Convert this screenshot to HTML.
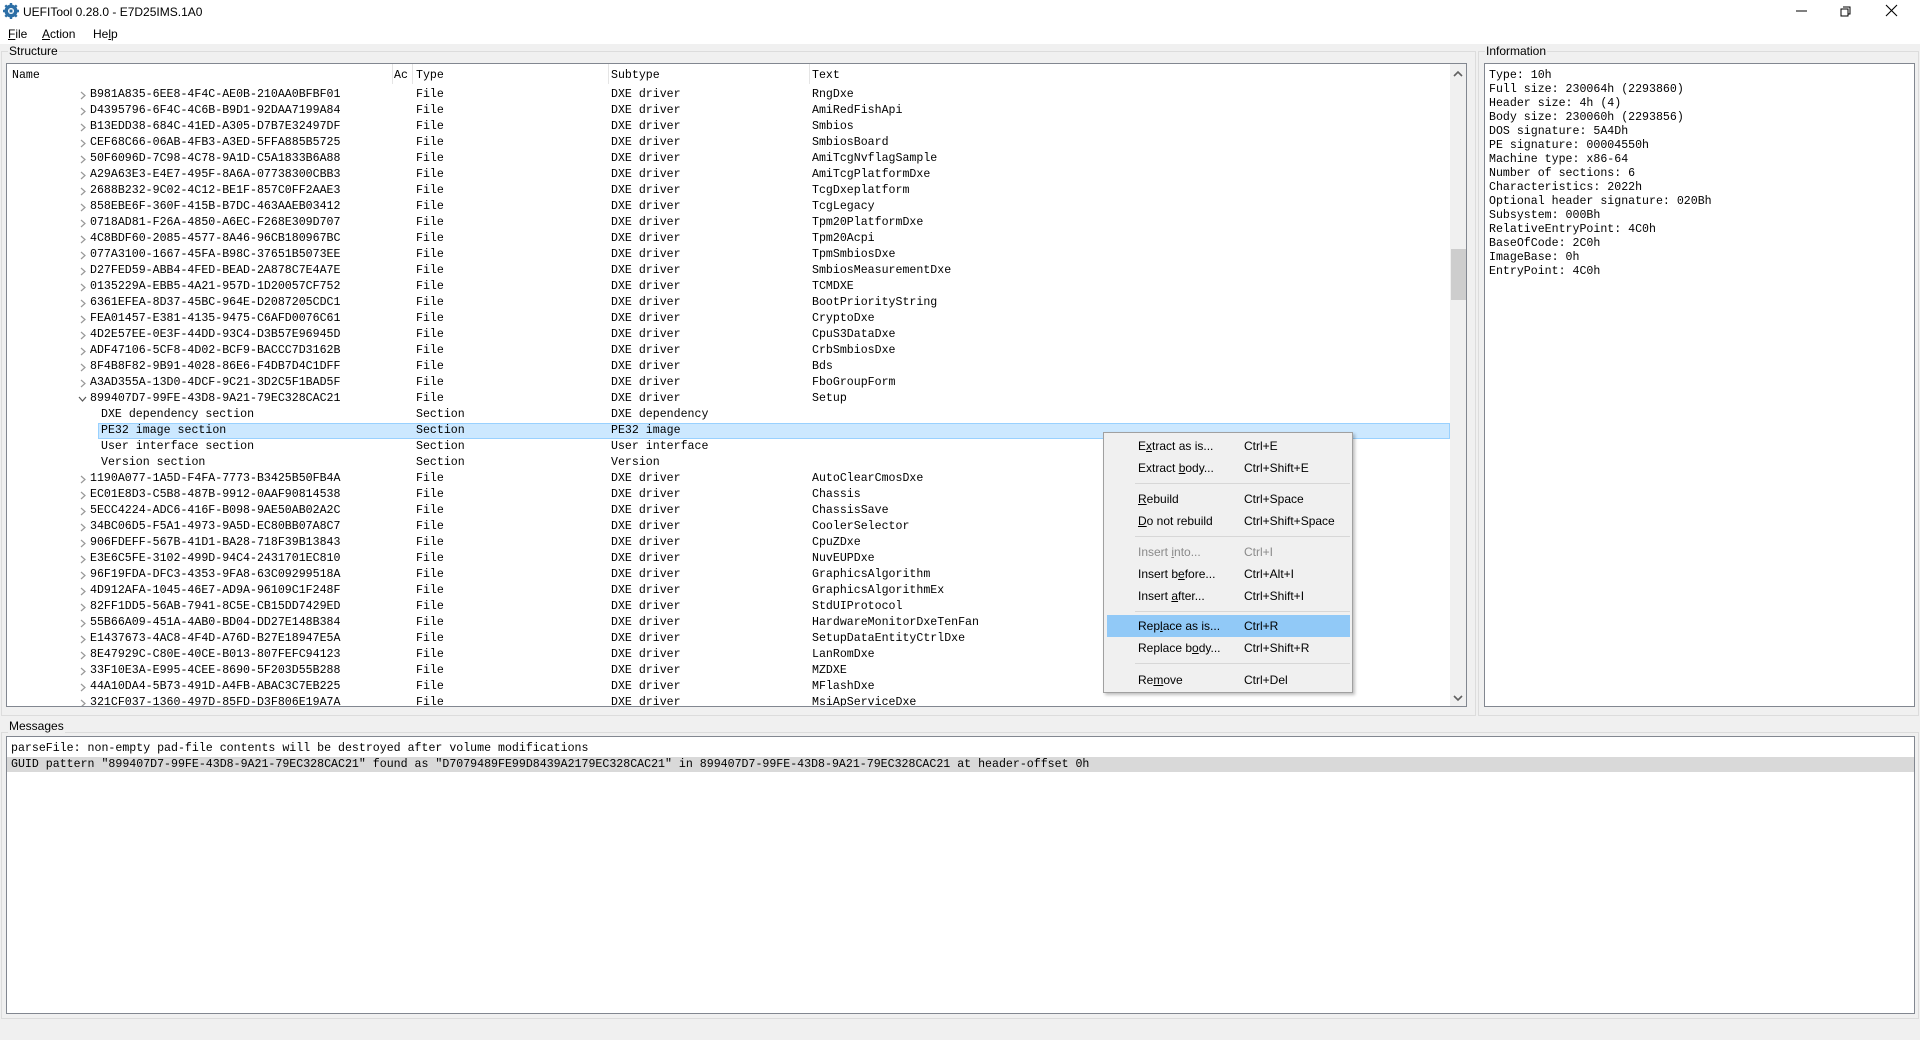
<!DOCTYPE html>
<html><head><meta charset="utf-8"><style>
*{margin:0;padding:0;box-sizing:border-box}
body{width:1920px;height:1040px;background:#f0f0f0;position:relative;overflow:hidden;font-family:"Liberation Sans",sans-serif;font-size:12px;color:#000}
.a{position:absolute;white-space:pre}
.m{font-family:"Liberation Mono",monospace;font-size:11.6px}
.box{position:absolute;background:#fff;border:1px solid #828790}
.grp{position:absolute;border:1px solid #dcdcdc}
.r{position:absolute;left:0;height:16px;line-height:16px;width:1442px}
.r span{position:absolute;top:0}
.mi{position:absolute;left:3px;width:243px;height:22px;line-height:22px}
.mi span{position:absolute}
.sep{position:absolute;left:31px;width:215px;height:1px;background:#d7d7d7}
.dis{color:#8a8a8a}
u{text-decoration:underline}
</style></head><body>
<div class="a" style="left:0;top:0;width:1920px;height:44px;background:#fff"></div>
<svg class="a" style="left:3px;top:3px" width="16" height="16" viewBox="0 0 16 16"><circle cx="8" cy="8" r="6.5" fill="#2d6fa6"/><g stroke="#2d6fa6" stroke-width="2.4"><path d="M8 0v16M0 8h16M2.3 2.3l11.4 11.4M13.7 2.3L2.3 13.7"/></g><circle cx="8" cy="8" r="3" fill="#fff"/><rect x="6.5" y="6.5" width="3" height="3" fill="#2d6fa6"/></svg>
<div class="a" style="left:23px;top:5px;font-size:12px">UEFITool 0.28.0 - E7D25IMS.1A0</div>
<svg class="a" style="left:1796px;top:4px" width="112" height="14"><path d="M0 7h11" stroke="#000"/><path d="M47 3h7v7h-2M45 5h7v7h-7z" fill="none" stroke="#000"/><path d="M90 1l11 11M101 1L90 12" stroke="#000" stroke-width="1.1"/></svg>
<div class="a" style="left:8px;top:27px"><u>F</u>ile</div>
<div class="a" style="left:42px;top:27px"><u>A</u>ction</div>
<div class="a" style="left:93px;top:27px">He<u>l</u>p</div>

<div class="grp" style="left:1px;top:51px;width:1475px;height:665px"></div>
<div class="a" style="left:8px;top:44px;background:#f0f0f0;padding:0 1px">Structure</div>
<div class="grp" style="left:1478px;top:51px;width:441px;height:665px"></div>
<div class="a" style="left:1485px;top:44px;background:#f0f0f0;padding:0 1px">Information</div>
<div class="grp" style="left:1px;top:732px;width:1918px;height:287px"></div>
<div class="a" style="left:8px;top:719px;background:#f0f0f0;padding:0 1px">Messages</div>

<div class="box" style="left:6px;top:63px;width:1461px;height:644px;overflow:hidden">
<div class="a" style="left:385px;top:0;width:1px;height:20px;background:#e5e5e5"></div>
<div class="a" style="left:405px;top:0;width:1px;height:20px;background:#e5e5e5"></div>
<div class="a" style="left:601px;top:0;width:1px;height:20px;background:#e5e5e5"></div>
<div class="a" style="left:802px;top:0;width:1px;height:20px;background:#e5e5e5"></div>
<div class="a m" style="left:5px;top:5px">Name</div>
<div class="a m" style="left:387px;top:5px">Ac</div>
<div class="a m" style="left:409px;top:5px">Type</div>
<div class="a m" style="left:604px;top:5px">Subtype</div>
<div class="a m" style="left:805px;top:5px">Text</div>
<div class="a" style="left:1443px;top:0;width:17px;height:642px;background:#f0f0f0"></div>
<svg class="a" style="left:1446px;top:6px" width="10" height="8"><path d="M1 6l4-4 4 4" fill="none" stroke="#606060" stroke-width="1.6"/></svg>
<svg class="a" style="left:1446px;top:630px" width="10" height="8"><path d="M1 2l4 4 4-4" fill="none" stroke="#606060" stroke-width="1.6"/></svg>
<div class="a" style="left:1444px;top:185px;width:15px;height:51px;background:#cdcdcd"></div>
<div class="a" style="left:91px;top:359px;width:1352px;height:16px;background:#cce8ff;border:1px solid #99d1ff"></div>
<div class="m" id="rows" style="position:absolute;left:0;top:23px"></div>
</div>

<div class="box" style="left:1484px;top:63px;width:431px;height:644px">
<div class="a m" style="left:4px;top:5px;line-height:14px">Type: 10h
Full size: 230064h (2293860)
Header size: 4h (4)
Body size: 230060h (2293856)
DOS signature: 5A4Dh
PE signature: 00004550h
Machine type: x86-64
Number of sections: 6
Characteristics: 2022h
Optional header signature: 020Bh
Subsystem: 000Bh
RelativeEntryPoint: 4C0h
BaseOfCode: 2C0h
ImageBase: 0h
EntryPoint: 4C0h</div>
</div>

<div class="box" style="left:6px;top:736px;width:1909px;height:278px">
<div class="a" style="left:0;top:20px;width:1907px;height:15px;background:#d9d9d9"></div>
<div class="a m" style="left:4px;top:4px;line-height:16px">parseFile: non-empty pad-file contents will be destroyed after volume modifications
GUID pattern "899407D7-99FE-43D8-9A21-79EC328CAC21" found as "D7079489FE99D8439A2179EC328CAC21" in 899407D7-99FE-43D8-9A21-79EC328CAC21 at header-offset 0h</div>
</div>

<div class="a" style="left:1103px;top:432px;width:250px;height:261px;background:#f0f0f0;border:1px solid #a0a0a0;box-shadow:2px 2px 3px rgba(0,0,0,.25)">
<div class="mi" style="top:2px"><span style="left:31px">E<u>x</u>tract as is...</span><span style="left:137px">Ctrl+E</span></div>
<div class="mi" style="top:24px"><span style="left:31px">Extract <u>b</u>ody...</span><span style="left:137px">Ctrl+Shift+E</span></div>
<div class="sep" style="top:50px"></div>
<div class="mi" style="top:55px"><span style="left:31px"><u>R</u>ebuild</span><span style="left:137px">Ctrl+Space</span></div>
<div class="mi" style="top:77px"><span style="left:31px"><u>D</u>o not rebuild</span><span style="left:137px">Ctrl+Shift+Space</span></div>
<div class="sep" style="top:103px"></div>
<div class="mi dis" style="top:108px"><span style="left:31px">Insert <u>i</u>nto...</span><span style="left:137px">Ctrl+I</span></div>
<div class="mi" style="top:130px"><span style="left:31px">Insert b<u>e</u>fore...</span><span style="left:137px">Ctrl+Alt+I</span></div>
<div class="mi" style="top:152px"><span style="left:31px">Insert <u>a</u>fter...</span><span style="left:137px">Ctrl+Shift+I</span></div>
<div class="sep" style="top:178px"></div>
<div class="mi" style="top:182px;background:#91c9f7"><span style="left:31px">Rep<u>l</u>ace as is...</span><span style="left:137px">Ctrl+R</span></div>
<div class="mi" style="top:204px"><span style="left:31px">Replace b<u>o</u>dy...</span><span style="left:137px">Ctrl+Shift+R</span></div>
<div class="sep" style="top:230px"></div>
<div class="mi" style="top:236px"><span style="left:31px">Re<u>m</u>ove</span><span style="left:137px">Ctrl+Del</span></div>
</div>

<script>
var d=[
["B981A835-6EE8-4F4C-AE0B-210AA0BFBF01","RngDxe"],
["D4395796-6F4C-4C6B-B9D1-92DAA7199A84","AmiRedFishApi"],
["B13EDD38-684C-41ED-A305-D7B7E32497DF","Smbios"],
["CEF68C66-06AB-4FB3-A3ED-5FFA885B5725","SmbiosBoard"],
["50F6096D-7C98-4C78-9A1D-C5A1833B6A88","AmiTcgNvflagSample"],
["A29A63E3-E4E7-495F-8A6A-07738300CBB3","AmiTcgPlatformDxe"],
["2688B232-9C02-4C12-BE1F-857C0FF2AAE3","TcgDxeplatform"],
["858EBE6F-360F-415B-B7DC-463AAEB03412","TcgLegacy"],
["0718AD81-F26A-4850-A6EC-F268E309D707","Tpm20PlatformDxe"],
["4C8BDF60-2085-4577-8A46-96CB180967BC","Tpm20Acpi"],
["077A3100-1667-45FA-B98C-37651B5073EE","TpmSmbiosDxe"],
["D27FED59-ABB4-4FED-BEAD-2A878C7E4A7E","SmbiosMeasurementDxe"],
["0135229A-EBB5-4A21-957D-1D20057CF752","TCMDXE"],
["6361EFEA-8D37-45BC-964E-D2087205CDC1","BootPriorityString"],
["FEA01457-E381-4135-9475-C6AFD0076C61","CryptoDxe"],
["4D2E57EE-0E3F-44DD-93C4-D3B57E96945D","CpuS3DataDxe"],
["ADF47106-5CF8-4D02-BCF9-BACCC7D3162B","CrbSmbiosDxe"],
["8F4B8F82-9B91-4028-86E6-F4DB7D4C1DFF","Bds"],
["A3AD355A-13D0-4DCF-9C21-3D2C5F1BAD5F","FboGroupForm"],
["899407D7-99FE-43D8-9A21-79EC328CAC21","Setup",1],
["DXE dependency section","","s","DXE dependency"],
["PE32 image section","","s","PE32 image"],
["User interface section","","s","User interface"],
["Version section","","s","Version"],
["1190A077-1A5D-F4FA-7773-B3425B50FB4A","AutoClearCmosDxe"],
["EC01E8D3-C5B8-487B-9912-0AAF90814538","Chassis"],
["5ECC4224-ADC6-416F-B098-9AE50AB02A2C","ChassisSave"],
["34BC06D5-F5A1-4973-9A5D-EC80BB07A8C7","CoolerSelector"],
["906FDEFF-567B-41D1-BA28-718F39B13843","CpuZDxe"],
["E3E6C5FE-3102-499D-94C4-2431701EC810","NuvEUPDxe"],
["96F19FDA-DFC3-4353-9FA8-63C09299518A","GraphicsAlgorithm"],
["4D912AFA-1045-46E7-AD9A-96109C1F248F","GraphicsAlgorithmEx"],
["82FF1DD5-56AB-7941-8C5E-CB15DD7429ED","StdUIProtocol"],
["55B66A09-451A-4AB0-BD04-DD27E148B384","HardwareMonitorDxeTenFan"],
["E1437673-4AC8-4F4D-A76D-B27E18947E5A","SetupDataEntityCtrlDxe"],
["8E47929C-C80E-40CE-B013-807FEFC94123","LanRomDxe"],
["33F10E3A-E995-4CEE-8690-5F203D55B288","MZDXE"],
["44A10DA4-5B73-491D-A4FB-ABAC3C7EB225","MFlashDxe"],
["321CF037-1360-497D-85FD-D3F806E19A7A","MsiApServiceDxe"]];
var h="";
d.forEach(function(r,i){var t=i*16;
if(r[2]=="s"){h+='<div class="r" style="top:'+t+'px"><span style="left:94px">'+r[0]+'</span><span style="left:409px">Section</span><span style="left:604px">'+r[3]+'</span></div>';}
else{var arr=r[2]?'<svg style="position:absolute;left:71px;top:5px" width="9" height="7"><path d="M1 1l3.5 4 3.5-4" fill="none" stroke="#555" stroke-width="1.2"/></svg>':'<svg style="position:absolute;left:73px;top:4px" width="6" height="9"><path d="M1 1l4 3.5-4 3.5" fill="none" stroke="#999" stroke-width="1.2"/></svg>';
h+='<div class="r" style="top:'+t+'px">'+arr+'<span style="left:83px">'+r[0]+'</span><span style="left:409px">File</span><span style="left:604px">DXE driver</span><span style="left:805px">'+r[1]+'</span></div>';}});
document.getElementById("rows").innerHTML=h;
</script>
</body></html>
